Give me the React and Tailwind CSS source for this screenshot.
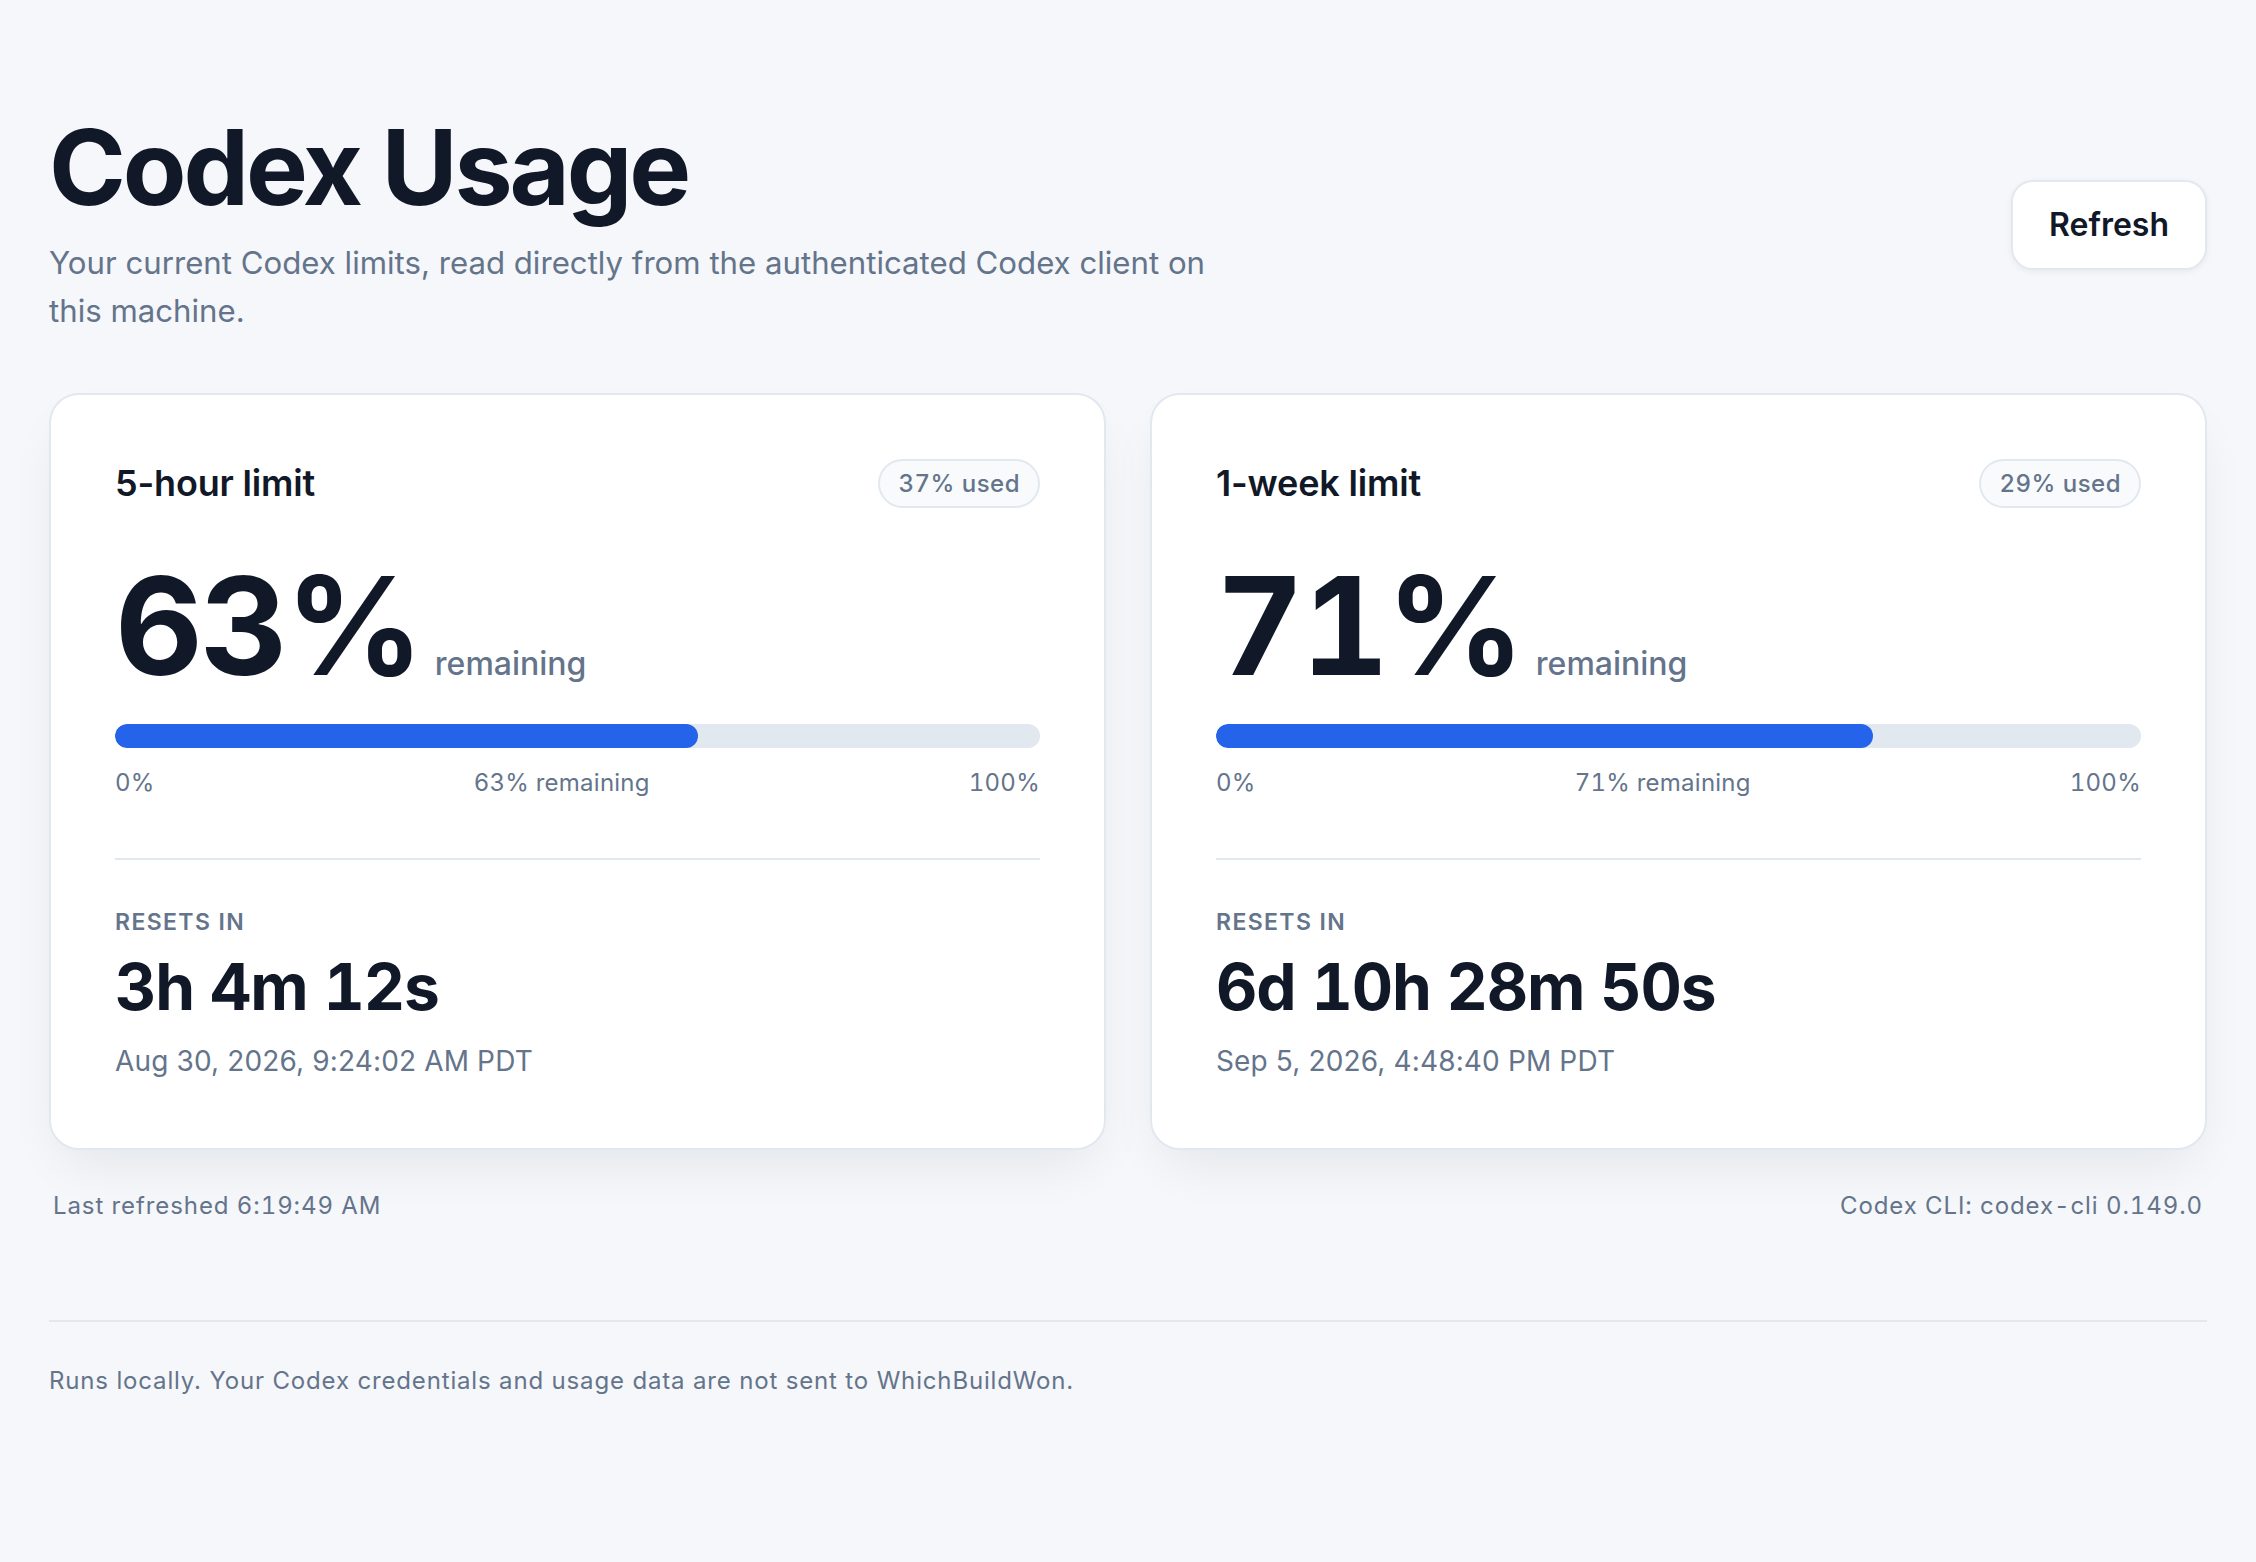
import React from "react";

const cards = [
  {
    title: "5-hour limit",
    used: 37,
    remaining: 63,
    resetsIn: "3h 4m 12s",
    resetAt: "Aug 30, 2026, 9:24:02 AM PDT",
  },
  {
    title: "1-week limit",
    used: 29,
    remaining: 71,
    resetsIn: "6d 10h 28m 50s",
    resetAt: "Sep 5, 2026, 4:48:40 PM PDT",
  },
];

function LimitCard({ card }) {
  return (
    <div className="rounded-[30px] border-2 border-[#e2e8f0] bg-white px-[64px] pt-[64px] pb-[67px] shadow-[0_24px_56px_-16px_rgba(15,23,42,0.09)]">
      <div className="flex items-start justify-between">
        <h2 className="text-[36px] leading-[48px] font-semibold tracking-[-0.005em] text-[#111827]">
          {card.title}
        </h2>
        <span className="rounded-full border-2 border-[#e2e8f0] bg-[#f8fafc] px-[18px] py-[6px] text-[24px] leading-[33px] font-medium tracking-[0.02em] tabular-nums text-[#64748b]">
          {card.used}% used
        </span>
      </div>
      <div className="mt-[50px] flex items-baseline gap-[14px]">
        <span className="text-[136px] leading-none font-bold tracking-[-0.02em] tabular-nums text-[#111827]">
          {card.remaining}%
        </span>
        <span className="text-[32px] leading-[40px] font-medium text-[#64748b]">
          remaining
        </span>
      </div>
      <div className="mt-[30px] h-[24px] w-full overflow-hidden rounded-full bg-[#e2e8f0]">
        <div
          className="h-full rounded-full bg-[#2563eb]"
          style={{ width: `${card.remaining}%` }}
        />
      </div>
      <div className="mt-[19px] flex justify-between text-[24px] leading-[32px] tracking-[0.01em] tabular-nums text-[#64748b]">
        <span>0%</span>
        <span>{card.remaining}% remaining</span>
        <span>100%</span>
      </div>
      <div className="mt-[59px] border-t-2 border-[#e2e8f0] pt-[46px]">
        <div className="text-[23px] leading-[32px] font-semibold uppercase tracking-[0.06em] text-[#64748b]">
          Resets in
        </div>
        <div className="mt-[14px] text-[64px] leading-[70px] font-bold tracking-[-0.018em] tabular-nums text-[#111827]">
          {card.resetsIn}
        </div>
        <div className="mt-[19px] text-[28px] leading-[40px] tracking-[0.005em] text-[#64748b]">
          {card.resetAt}
        </div>
      </div>
    </div>
  );
}

export default function App() {
  return (
    <div
      className="min-h-[1562px] bg-[#f5f7fa] px-[49px] pt-[115px]"
      style={{ fontFamily: "Inter, 'Noto Sans', 'Liberation Sans', sans-serif" }}
    >
      <header className="flex items-center justify-between">
        <div>
          <h1 className="text-[104px] leading-none font-bold tracking-[-0.03em] text-[#111827]">
            Codex Usage
          </h1>
          <p className="mt-[20px] max-w-[1205px] text-[31.2px] leading-[48px] text-[#64748b]">
            Your current Codex limits, read directly from the authenticated Codex client on this machine.
          </p>
        </div>
        <button className="rounded-[22px] border-2 border-[#e2e8f0] bg-white px-[36px] py-[23px] text-[32px] leading-[40px] font-semibold text-[#111827] shadow-[0_2px_6px_rgba(15,23,42,0.06)]">
          Refresh
        </button>
      </header>

      <div className="mt-[58px] grid grid-cols-2 gap-[44px]">
        {cards.map((c) => (
          <LimitCard key={c.title} card={c} />
        ))}
      </div>

      <div className="mt-[40px] flex justify-between px-[4px] text-[24px] leading-[32px] tracking-[0.038em] tabular-nums text-[#64748b]">
        <span>Last refreshed 6:19:49 AM</span>
        <span>Codex CLI: codex-cli 0.149.0</span>
      </div>

      <footer className="mt-[98px] border-t-2 border-[#e2e8f0] pt-[43px]">
        <p className="text-[24px] leading-[32px] tracking-[0.035em] text-[#64748b]">
          Runs locally. Your Codex credentials and usage data are not sent to WhichBuildWon.
        </p>
      </footer>
    </div>
  );
}
